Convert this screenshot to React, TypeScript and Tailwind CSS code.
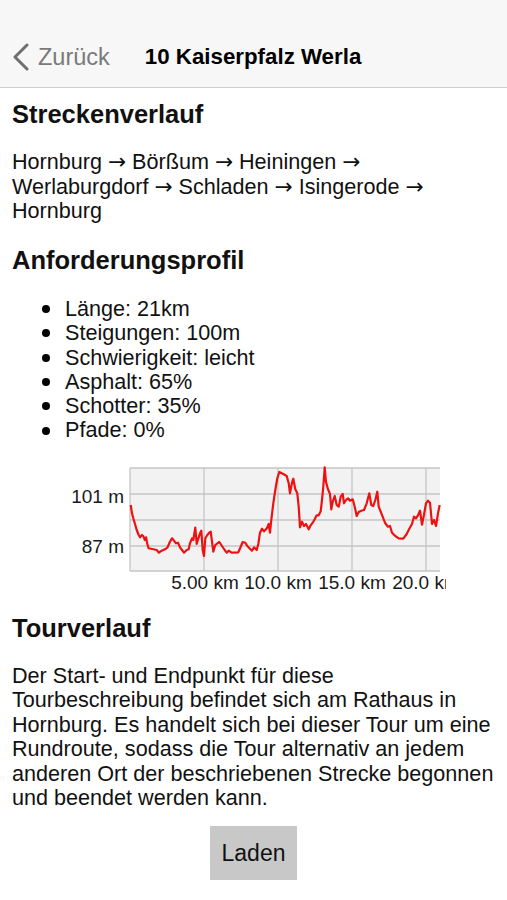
const font = { fontFamily: '"Liberation Sans", Arial, sans-serif' };
const arrowFont = { fontFamily: '"DejaVu Sans", sans-serif' };

// elevation trace, sampled off the reference (zoomed coords: x*3, y*3)
const trace: [number, number][] = [
  [212, 165], [216, 190], [220, 205], [226, 225], [230, 240], [236, 255], [240, 262], [246, 255], [250, 258], [254, 270], [258, 262], [262, 282], [266, 295], [280, 298], [290, 300], [297, 308], [305, 302], [315, 298], [322, 293], [330, 275], [336, 265], [342, 272], [348, 280], [354, 278], [360, 292], [366, 300], [372, 308], [380, 300], [386, 298], [390, 280], [396, 265], [400, 270], [406, 233], [410, 282], [416, 262], [420, 250], [424, 242], [428, 300], [432, 318], [436, 265], [442, 255], [448, 248], [452, 245], [456, 275], [460, 305], [466, 285], [472, 280], [478, 276], [486, 288], [494, 300], [500, 308], [506, 302], [515, 308], [535, 307], [542, 290], [548, 276], [556, 278], [562, 288], [570, 296], [576, 302], [582, 292], [590, 300], [595, 282], [600, 248], [606, 236], [612, 244], [618, 238], [622, 232], [626, 222], [630, 248], [634, 210], [640, 160], [646, 120], [652, 85], [658, 66], [670, 72], [680, 78], [686, 100], [690, 130], [696, 98], [700, 86], [706, 118], [712, 130], [716, 170], [720, 232], [726, 215], [732, 228], [738, 222], [746, 238], [752, 226], [758, 218], [764, 208], [770, 196], [776, 196], [782, 184], [786, 150], [790, 110], [794, 52], [798, 96], [804, 118], [810, 132], [814, 178], [818, 155], [824, 138], [830, 165], [836, 170], [842, 140], [848, 132], [852, 160], [858, 150], [864, 145], [870, 152], [878, 148], [884, 170], [890, 198], [896, 186], [904, 182], [912, 180], [920, 160], [928, 130], [934, 165], [940, 168], [946, 150], [952, 125], [956, 170], [962, 185], [970, 205], [976, 220], [984, 230], [990, 228], [996, 248], [1006, 258], [1016, 265], [1030, 266], [1040, 252], [1048, 236], [1056, 222], [1062, 200], [1068, 205], [1074, 196], [1080, 182], [1086, 224], [1092, 194], [1098, 160], [1104, 152], [1110, 158], [1116, 222], [1122, 210], [1128, 228], [1134, 190], [1139, 165],
];

function ElevationChart() {
  const pts = trace.map(([x, y]) => `${(x / 3 + 60).toFixed(1)},${(y / 3 + 450).toFixed(1)}`).join(' ');
  const vLines = [204, 278, 352, 426];
  const hLines = [494, 520, 546];
  return (
    <svg width={507} height={140} viewBox="0 458 507 140" className="block">
      <defs>
        <clipPath id="xclip">
          <rect x={0} y={458} width={446} height={140} />
        </clipPath>
      </defs>
      <rect x={130} y={468} width={310} height={103} fill="#f2f2f2" />
      {vLines.map((x) => (
        <line key={x} x1={x} y1={468} x2={x} y2={571} stroke="#c4c4c4" strokeWidth={1.3} />
      ))}
      {hLines.map((y) => (
        <line key={y} x1={130} y1={y} x2={440} y2={y} stroke="#c4c4c4" strokeWidth={1.3} />
      ))}
      <line x1={130} y1={468} x2={440} y2={468} stroke="#c4c4c4" strokeWidth={1.3} />
      <line x1={130} y1={468} x2={130} y2={571} stroke="#c4c4c4" strokeWidth={1.3} />
      <line x1={130} y1={571} x2={440} y2={571} stroke="#c4c4c4" strokeWidth={1.3} />
      <polyline points={pts} fill="none" stroke="#ee1111" strokeWidth={2.2} strokeLinejoin="round" />
      <g style={font} fontSize={19} fill="#1a1a1a">
        <text x={124} y={503} textAnchor="end">101 m</text>
        <text x={124} y={553} textAnchor="end">87 m</text>
        <g clipPath="url(#xclip)">
          <text x={205} y={589} textAnchor="middle">5.00 km</text>
          <text x={278} y={589} textAnchor="middle">10.0 km</text>
          <text x={352} y={589} textAnchor="middle">15.0 km</text>
          <text x={426} y={589} textAnchor="middle">20.0 km</text>
        </g>
      </g>
    </svg>
  );
}

const facts = [
  'Länge: 21km',
  'Steigungen: 100m',
  'Schwierigkeit: leicht',
  'Asphalt: 65%',
  'Schotter: 35%',
  'Pfade: 0%',
];

function Arrow() {
  return <span style={arrowFont}>→</span>;
}

export default function App() {
  return (
    <div className="min-h-[900px] w-[507px] bg-white text-[#111]" style={font}>
      <header className="flex h-[88px] items-end border-b border-[#cfcfcf] bg-[#f7f7f7] pb-[16px]">
        <div className="flex items-center pl-[12px]">
          <svg width={18} height={28} viewBox="0 0 18 28" className="mr-[8px]">
            <path d="M15 2 L3 14 L15 26" fill="none" stroke="#6f6f6f" strokeWidth={3} strokeLinecap="round" strokeLinejoin="round" />
          </svg>
          <span className="text-[23.5px] leading-[28px] text-[#7a7a7a]">Zurück</span>
        </div>
        <h1 className="ml-[35px] text-[22.3px] leading-[28px] font-semibold text-black">10 Kaiserpfalz Werla</h1>
      </header>

      <main className="pl-[12px] pr-[4px]">
        <h2 className="mt-[12px] text-[25.5px] leading-[28px] font-bold">Streckenverlauf</h2>
        <p className="mt-[22px] text-[21.6px] leading-[24.5px]">
          Hornburg <Arrow /> Börßum <Arrow /> Heiningen <Arrow />
          <br />
          Werlaburgdorf <Arrow /> Schladen <Arrow /> Isingerode <Arrow />
          <br />
          Hornburg
        </p>

        <h2 className="mt-[22.5px] text-[25.5px] leading-[28px] font-bold">Anforderungsprofil</h2>
        <ul className="mt-[23px] text-[21.6px] leading-[24.3px]">
          {facts.map((f) => (
            <li key={f} className="flex items-center">
              <span className="ml-[30px] mr-[15px] h-[8px] w-[8px] rounded-full bg-black" />
              {f}
            </li>
          ))}
        </ul>
      </main>

      <div className="mt-[15px]">
        <ElevationChart />
      </div>

      <section className="pl-[12px] pr-[4px]">
        <h2 className="mt-[16px] text-[25.5px] leading-[28px] font-bold">Tourverlauf</h2>
        <p className="mt-[22px] text-[21.6px] leading-[24.5px]">
          Der Start- und Endpunkt für diese
          <br />
          Tourbeschreibung befindet sich am Rathaus in
          <br />
          Hornburg. Es handelt sich bei dieser Tour um eine
          <br />
          Rundroute, sodass die Tour alternativ an jedem
          <br />
          anderen Ort der beschriebenen Strecke begonnen
          <br />
          und beendet werden kann.
        </p>
      </section>

      <div className="mt-[15px] flex justify-center">
        <button className="h-[54px] w-[87px] bg-[#c8c8c8] text-[23px] text-[#111]">Laden</button>
      </div>
    </div>
  );
}
